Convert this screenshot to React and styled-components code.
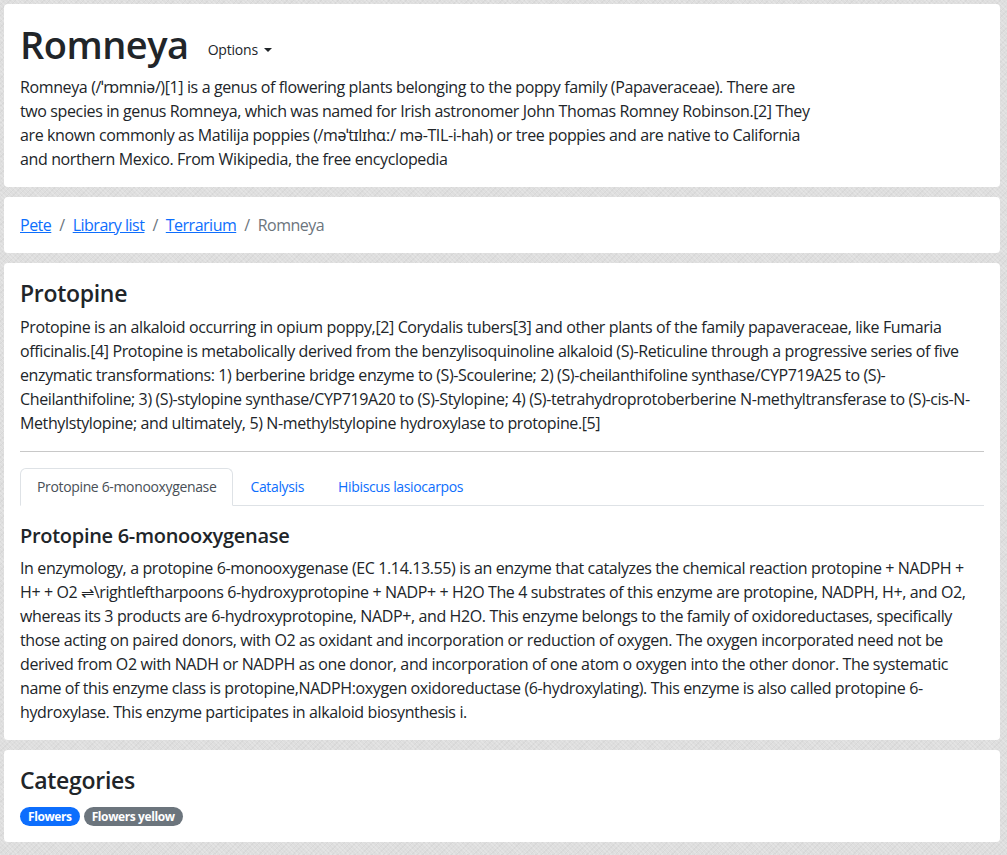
import React, { useState } from "react";
import styled, { createGlobalStyle } from "styled-components";

const GlobalStyle = createGlobalStyle`
  html, body {
    margin: 0;
    padding: 0;
  }
  body {
    background-color: #dedede;
    background-image:
      repeating-linear-gradient(45deg, rgba(255,255,255,0.18) 0 1px, transparent 1px 3px),
      repeating-linear-gradient(-45deg, rgba(0,0,0,0.03) 0 1px, transparent 1px 4px);
    font-family: "Open Sans", "Noto Sans", sans-serif;
    font-size: 16px;
    line-height: 1.5;
    color: #212529;
  }
`;

const Page = styled.div`
  display: flex;
  flex-direction: column;
  gap: 10px;
  padding: 4px 7px 12px 4px;
`;

const Card = styled.section`
  background: #fff;
  border-radius: 4px;
  padding: 16px;
`;

const TitleRow = styled.div`
  display: flex;
  align-items: center;
  gap: 10px;
  margin-bottom: 7px;
`;

const Title = styled.h1`
  margin: 0;
  font-size: 38px;
  font-weight: 600;
  line-height: 48px;
  letter-spacing: -0.5px;
`;

const OptionsButton = styled.button`
  margin-top: 10px;
  background: transparent;
  border: 1px solid transparent;
  border-radius: 4px;
  padding: 4px 8px;
  font-family: inherit;
  font-size: 14px;
  line-height: 21px;
  color: #212529;
  cursor: pointer;
  letter-spacing: -0.2px;

  &::after {
    content: "";
    display: inline-block;
    margin-left: 6px;
    vertical-align: 3px;
    border-top: 4px solid;
    border-right: 4px solid transparent;
    border-left: 4px solid transparent;
  }
`;

const Text = styled.p`
  margin: 0;
  letter-spacing: -0.38px;
  max-width: ${(p) => (p.$narrow ? "800px" : "none")};
`;

const Crumbs = styled.ol`
  display: flex;
  list-style: none;
  margin: 0;
  padding: 0;
  letter-spacing: -0.5px;
`;

const Crumb = styled.li`
  color: ${(p) => (p.$active ? "#6c757d" : "inherit")};

  &:not(:first-child)::before {
    content: "/";
    padding: 0 8px;
    color: #6c757d;
  }
`;

const Link = styled.a`
  color: #0d6efd;
  text-decoration: underline;
  cursor: pointer;
`;

const Heading = styled.h2`
  margin: 0 0 8px;
  font-size: ${(p) => p.$size || "23px"};
  font-weight: 600;
  line-height: ${(p) => (p.$size ? "1.2" : "28px")};
  letter-spacing: -0.3px;
`;

const Rule = styled.hr`
  margin: 16px 0;
  border: 0;
  border-top: 1px solid #c8c8c8;
`;

const Tabs = styled.ul`
  display: flex;
  list-style: none;
  margin: 0;
  padding: 0;
  border-bottom: 1px solid #dee2e6;
`;

const Tab = styled.button`
  margin-bottom: -1px;
  background: ${(p) => (p.$active ? "#fff" : "transparent")};
  border: 1px solid transparent;
  border-color: ${(p) => (p.$active ? "#dee2e6 #dee2e6 #fff" : "transparent")};
  border-top-left-radius: 6px;
  border-top-right-radius: 6px;
  padding: 8px 16px;
  font-family: inherit;
  font-size: 14px;
  line-height: 20px;
  letter-spacing: -0.35px;
  color: ${(p) => (p.$active ? "#495057" : "#0d6efd")};
  cursor: pointer;
  outline: none;
`;

const Pane = styled.div`
  padding-top: 18px;
`;

const Badges = styled.div`
  display: flex;
  gap: 4px;
  padding-top: 5px;
`;

const Badge = styled.span`
  display: inline-block;
  padding: 4px 8px 3px;
  font-size: 12px;
  font-weight: 700;
  line-height: 12px;
  letter-spacing: -0.4px;
  color: #fff;
  background: ${(p) => p.$bg};
  border-radius: 999px;
`;

const tabs = ["Protopine 6-monooxygenase", "Catalysis", "Hibiscus lasiocarpos"];

export default function App() {
  const [active, setActive] = useState(0);

  return (
    <>
      <GlobalStyle />
      <Page>
        <Card>
          <TitleRow>
            <Title>Romneya</Title>
            <OptionsButton>Options</OptionsButton>
          </TitleRow>
          <Text $narrow>
            Romneya (/ˈrɒmniə/)[1] is a genus of flowering plants belonging to
            the poppy family (Papaveraceae). There are two species in genus
            Romneya, which was named for Irish astronomer John Thomas Romney
            Robinson.[2] They are known commonly as Matilija poppies (/məˈtɪlɪhɑː/
            mə-TIL-i-hah) or tree poppies and are native to California and
            northern Mexico. From Wikipedia, the free encyclopedia
          </Text>
        </Card>

        <Card>
          <Crumbs>
            <Crumb><Link>Pete</Link></Crumb>
            <Crumb><Link>Library list</Link></Crumb>
            <Crumb><Link>Terrarium</Link></Crumb>
            <Crumb $active>Romneya</Crumb>
          </Crumbs>
        </Card>

        <Card>
          <Heading>Protopine</Heading>
          <Text>
            Protopine is an alkaloid occurring in opium poppy,[2] Corydalis
            tubers[3] and other plants of the family papaveraceae, like Fumaria
            officinalis.[4] Protopine is metabolically derived from the
            benzylisoquinoline alkaloid (S)-Reticuline through a progressive
            series of five enzymatic transformations: 1) berberine bridge enzyme
            to (S)-Scoulerine; 2) (S)-cheilanthifoline synthase/CYP719A25 to
            (S)-Cheilanthifoline; 3) (S)-stylopine synthase/CYP719A20 to
            (S)-Stylopine; 4) (S)-tetrahydroprotoberberine N-methyltransferase
            to (S)-cis-N-Methylstylopine; and ultimately, 5) N-methylstylopine
            hydroxylase to protopine.[5]
          </Text>
          <Rule />
          <Tabs>
            {tabs.map((t, i) => (
              <li key={t}>
                <Tab $active={i === active} onClick={() => setActive(i)}>
                  {t}
                </Tab>
              </li>
            ))}
          </Tabs>
          <Pane>
            <Heading $size="20px">Protopine 6-monooxygenase</Heading>
            <Text>
              In enzymology, a protopine 6-monooxygenase (EC 1.14.13.55) is an
              enzyme that catalyzes the chemical reaction protopine + NADPH + H+
              + O2 ⇌\rightleftharpoons 6-hydroxyprotopine + NADP+ + H2O The 4
              substrates of this enzyme are protopine, NADPH, H+, and O2, whereas
              its 3 products are 6-hydroxyprotopine, NADP+, and H2O. This enzyme
              belongs to the family of oxidoreductases, specifically those acting
              on paired donors, with O2 as oxidant and incorporation or reduction
              of oxygen. The oxygen incorporated need not be derived from O2 with
              NADH or NADPH as one donor, and incorporation of one atom o oxygen
              into the other donor. The systematic name of this enzyme class is
              protopine,NADPH:oxygen oxidoreductase (6-hydroxylating). This
              enzyme is also called protopine 6-hydroxylase. This enzyme
              participates in alkaloid biosynthesis i.
            </Text>
          </Pane>
        </Card>

        <Card>
          <Heading>Categories</Heading>
          <Badges>
            <Badge $bg="#0d6efd">Flowers</Badge>
            <Badge $bg="#6c757d">Flowers yellow</Badge>
          </Badges>
        </Card>
      </Page>
    </>
  );
}
